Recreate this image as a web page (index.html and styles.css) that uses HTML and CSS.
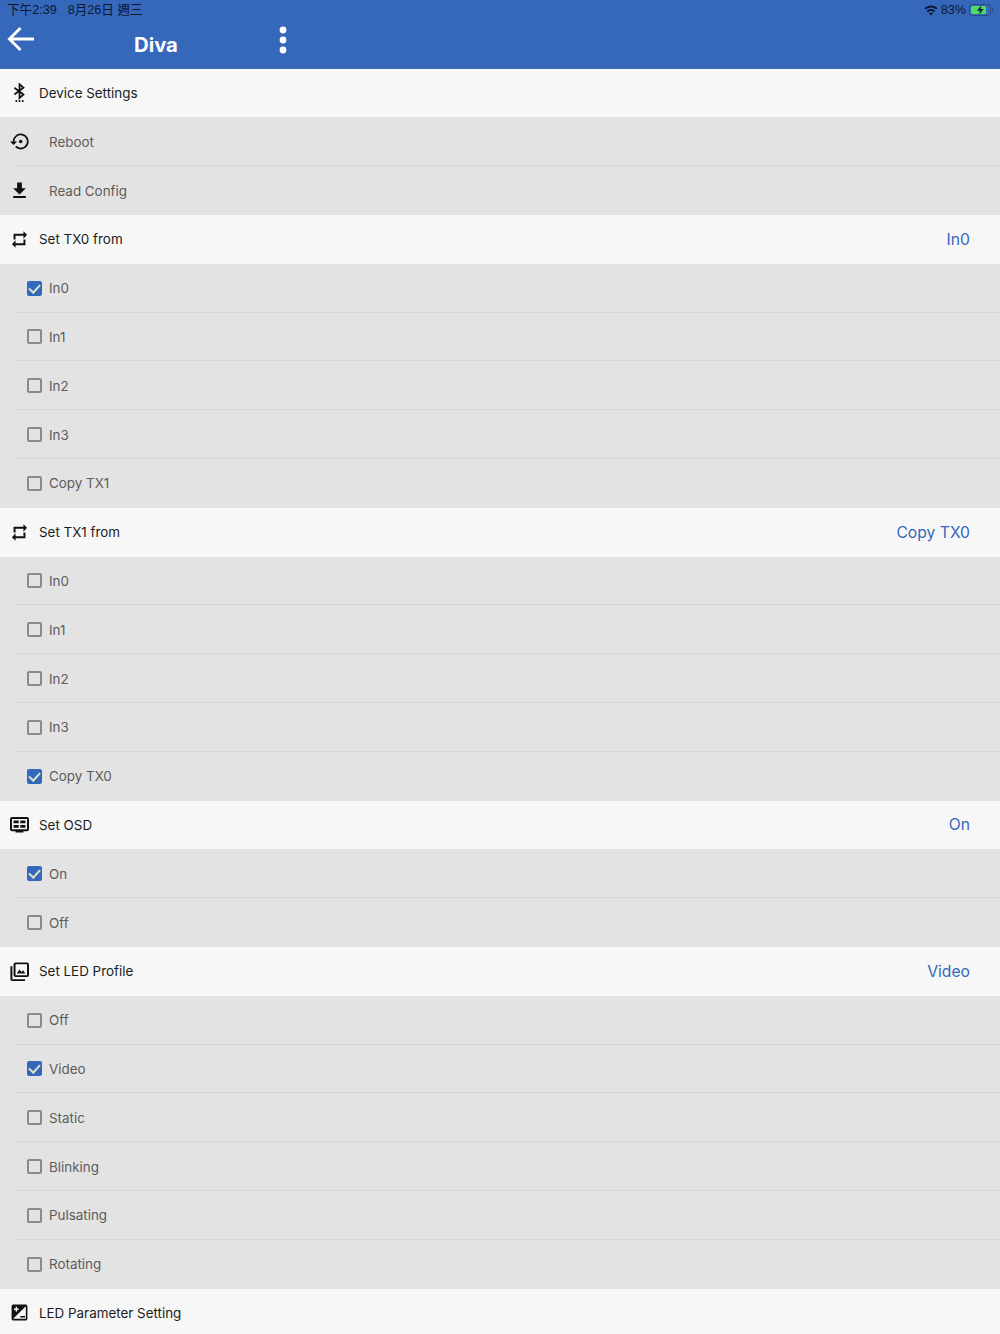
FILE: index.html
```html
<!DOCTYPE html>
<html lang="zh-Hant">
<head>
<meta charset="utf-8">
<title>Diva</title>
<link rel="stylesheet" href="styles.css">
</head>
<body>
<header class="appbar">
  <div class="status">
    <div class="status-left"><span>下午2:39</span><span>8月26日 週三</span></div>
    <div class="status-right">
      <svg class="wifi" viewBox="0 0 14 11"><path d="M7 .5C4.500.5 2.200 1.500.5 3.200l1.300 1.400C3.200 3.200 5 2.400 7 2.400s3.800.8 5.200 2.200l1.300-1.400C11.800 1.500 9.500.5 7 .5zM7 4c-1.600 0-3.100.7-4.200 1.800L4.100 7.200C4.900 6.400 5.900 6 7 6s2.100.4 2.900 1.200l1.300-1.400C10.100 4.700 8.600 4 7 4zM7 7.400c-.8 0-1.500.3-2 .9l2 2.200 2-2.200c-.5-.6-1.200-.9-2-.9z"/></svg>
      <span>83%</span>
      <svg class="battery" viewBox="0 0 25 12"><rect x=".5" y=".5" width="21" height="11" rx="3" fill="none" stroke="#2a4a80"/><rect x="2" y="2" width="15" height="8" rx="1.500" fill="#4cd964"/><path d="M23 4v4c.8-.3 1.300-1 1.300-2S23.800 4.300 23 4z" fill="#2a4a80"/><path d="M12.500 1 8 6.800h3L10 11l4.600-6h-3z" fill="#10203c"/></svg>
    </div>
  </div>
  <div class="toolbar">
    <svg class="back" viewBox="0 0 27 26"><path d="M13.500 2 2.500 13l11 11M2.500 13H27" fill="none" stroke="#fff" stroke-width="3"/></svg>
    <h1>Diva</h1>
    <svg class="more" viewBox="0 0 8 28"><circle cx="4" cy="4" r="3.400"/><circle cx="4" cy="14" r="3.400"/><circle cx="4" cy="24" r="3.400"/></svg>
  </div>
</header>
<main>
  <div class="row head">
    <svg class="ico" viewBox="0 0 24 24"><path d="M5.500 6 17 14.500 12 19V1.500l5 4.500L5.500 14.500" fill="none" stroke="#111" stroke-width="2.200"/><path d="M7 21.500h2V24H7zM11 21.500h2V24h-2zM15 21.500h2V24h-2z"/></svg>
    <span>Device Settings</span>
  </div>
  <div class="row sub">
    <svg class="ico" viewBox="0 0 24 24"><path d="M13.500 2A10 10 0 0 0 3.500 12H0l4.500 4.500L9 12H5.700a7.800 7.800 0 1 1 2.300 5.500l-1.500 1.600A10 10 0 1 0 13.500 2z"/><circle cx="13.500" cy="12" r="2.200"/></svg>
    <span class="action">Reboot</span>
  </div>
  <div class="row sub">
    <svg class="ico" viewBox="0 0 24 24"><path d="M20 9h-5V2H9v7H4l8 8zM4 19v2.500h16V19z"/></svg>
    <span class="action">Read Config</span>
  </div>

  <div class="row head">
    <svg class="ico" viewBox="0 0 24 24"><path d="M7 7.200h10V11l4.500-5L17 1.500v3.300H4.500V12H7zM17 16.800H7V13l-4.500 5L7 22.500v-3.300h12.500V12H17z"/></svg>
    <span>Set TX0 from</span><b>In0</b>
  </div>
  <label class="row sub"><i class="box on"></i><span>In0</span></label>
  <label class="row sub"><i class="box"></i><span>In1</span></label>
  <label class="row sub"><i class="box"></i><span>In2</span></label>
  <label class="row sub"><i class="box"></i><span>In3</span></label>
  <label class="row sub"><i class="box"></i><span>Copy TX1</span></label>

  <div class="row head">
    <svg class="ico" viewBox="0 0 24 24"><path d="M7 7.200h10V11l4.500-5L17 1.500v3.300H4.500V12H7zM17 16.800H7V13l-4.500 5L7 22.500v-3.300h12.500V12H17z"/></svg>
    <span>Set TX1 from</span><b>Copy TX0</b>
  </div>
  <label class="row sub"><i class="box"></i><span>In0</span></label>
  <label class="row sub"><i class="box"></i><span>In1</span></label>
  <label class="row sub"><i class="box"></i><span>In2</span></label>
  <label class="row sub"><i class="box"></i><span>In3</span></label>
  <label class="row sub"><i class="box on"></i><span>Copy TX0</span></label>

  <div class="row head">
    <svg class="ico" viewBox="0 0 24 24"><path fill-rule="evenodd" d="M2.500 2.500h19A2.500 2.500 0 0 1 24 5v13a2.500 2.500 0 0 1-2.500 2.500H17V22H7v-1.500H2.500A2.500 2.500 0 0 1 0 18V5a2.500 2.500 0 0 1 2.500-2.500zm0 2.500v13h19V5zM4.500 7h6.500v3.500H4.500zM13 7h6.500v3.500H13zM4.500 12.500H11V16H4.500zM13 12.500h6.500V16H13z"/></svg>
    <span>Set OSD</span><b>On</b>
  </div>
  <label class="row sub"><i class="box on"></i><span>On</span></label>
  <label class="row sub"><i class="box"></i><span>Off</span></label>

  <div class="row head">
    <svg class="ico" viewBox="0 0 24 24"><path fill-rule="evenodd" d="M.5 5.500v16A2.500 2.500 0 0 0 3 24h16v-2.200H3V5.500zM7 .5h14.500A2.500 2.500 0 0 1 24 3v13.500a2.500 2.500 0 0 1-2.500 2.500H7a2.500 2.500 0 0 1-2.500-2.500V3A2.500 2.500 0 0 1 7 .5zm0 2.300v13.800h14.500V2.800zM8.500 14.500l3.500-5 2.500 3 2-2 3 4z"/></svg>
    <span>Set LED Profile</span><b>Video</b>
  </div>
  <label class="row sub"><i class="box"></i><span>Off</span></label>
  <label class="row sub"><i class="box on"></i><span>Video</span></label>
  <label class="row sub"><i class="box"></i><span>Static</span></label>
  <label class="row sub"><i class="box"></i><span>Blinking</span></label>
  <label class="row sub"><i class="box"></i><span>Pulsating</span></label>
  <label class="row sub"><i class="box"></i><span>Rotating</span></label>

  <div class="row head">
    <svg class="ico" viewBox="0 0 24 24"><path fill-rule="evenodd" d="M4 2h16a2 2 0 0 1 2 2v16a2 2 0 0 1-2 2H4a2 2 0 0 1-2-2V4a2 2 0 0 1 2-2zM20 4 4 20h16zM5 7v1.700h2.200v2.200h1.700V8.700H11V7H8.900V4.800H7.200V7zM13 16.500h6v1.700h-6z"/></svg>
    <span>LED Parameter Setting</span>
  </div>
</main>
</body>
</html>
```
FILE: styles.css
```css
* { box-sizing: border-box; }
html, body { margin: 0; padding: 0; }
body {
  width: 1000px;
  height: 1334px;
  overflow: hidden;
  background: #f7f7f7;
  font-family: Inter, Roboto, "Liberation Sans", sans-serif;
}
.appbar {
  height: 68.6px;
  background: #3567bb;
  display: flex;
  flex-direction: column;
}
.status {
  height: 20px;
  padding: 0 7px;
  display: flex;
  justify-content: space-between;
  align-items: center;
  color: #0c1830;
  font: 12.6px/20px "Liberation Sans", "Noto Sans CJK TC", sans-serif;
}
.status-left { display: flex; gap: 11px; }
.status-right { display: flex; align-items: center; gap: 3px; }
.wifi { width: 14px; height: 11px; fill: #0c1830; }
.battery { width: 25px; height: 12px; margin-right: -1px; }
.toolbar {
  flex: 1;
  display: flex;
  align-items: flex-start;
  padding-left: 6.5px;
}
.back { width: 27px; height: 26px; margin-top: 6px; flex: none; }
.toolbar h1 {
  margin: 12px 0 0 100.500px;
  font-size: 20.3px;
  line-height: 26px;
  font-weight: 700;
  color: #fff;
  width: 44px;
  white-space: nowrap;
}
.more { width: 8px; height: 28px; fill: #fff; margin: 6px 0 0 101px; flex: none; }
.row {
  height: 48.8px;
  display: flex;
  align-items: center;
  position: relative;
  font-size: 13.4px;
}
.head { background: #f7f7f7; color: #1c1c1c; padding: 0 30px 0 10px; }
.sub { background: #e3e3e3; color: #5c5c5c; padding-left: 10px; }
.sub + .sub::before {
  content: "";
  position: absolute;
  left: 15px;
  right: 0;
  top: -1px;
  height: 1px;
  background: #d7d7d7;
}
.ico { width: 19px; height: 19px; flex: none; fill: #111; margin-right: 10px; }
.action { margin-left: 10px; }
.head b { margin-left: auto; font-weight: 400; font-size: 15.7px; color: #3567bb; }
.box {
  width: 15px;
  height: 15px;
  margin: 0 7px 0 17px;
  border: 2.5px solid #8a8a8a;
  border-radius: 2px;
  flex: none;
  position: relative;
}
.box.on { background: #3567bb; border-color: #3567bb; }
.box.on::after {
  content: "";
  position: absolute;
  left: 2px;
  top: -1px;
  width: 5px;
  height: 9px;
  border: solid #d9e4c8;
  border-width: 0 2px 2px 0;
  transform: rotate(42deg);
}
```
